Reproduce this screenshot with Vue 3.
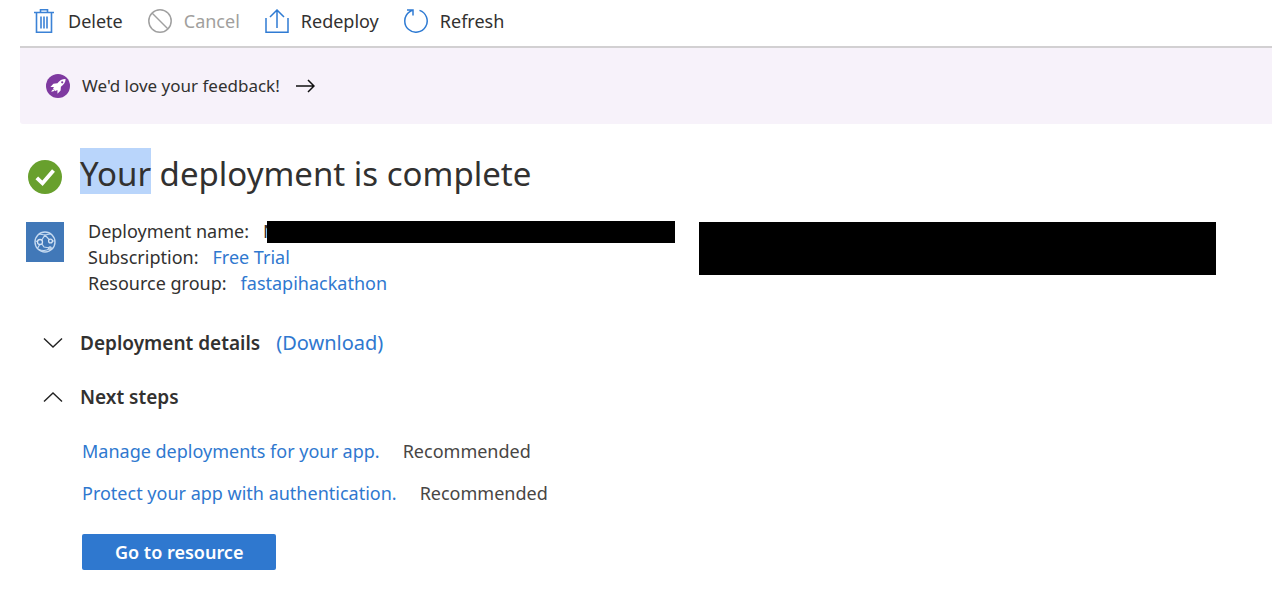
<script setup>
const steps = [
  'Manage deployments for your app.',
  'Protect your app with authentication.',
]
</script>

<template>
  <main class="page">
    <div class="toolbar" role="toolbar" aria-label="Deployment actions">
      <button type="button" class="tool">
        <svg width="22" height="24" viewBox="0 0 22 24" fill="none" stroke="#3b82d6" aria-hidden="true">
          <path d="M0 3.5H20M6.5 3V.8H13.5V3M2.5 4V23.3H17.5V4" stroke-width="1.6" />
          <path d="M7 7.5V19.5M10 7.5V19.5M13 7.5V19.5" stroke-width="1.6" />
        </svg>
        <span>Delete</span>
      </button>
      <button type="button" class="tool" disabled>
        <svg width="24" height="24" viewBox="0 0 24 24" fill="none" stroke="#a0a0a0" stroke-width="1.5" aria-hidden="true">
          <circle cx="12" cy="12" r="11.2" />
          <path d="M4 4L20 20" />
        </svg>
        <span>Cancel</span>
      </button>
      <button type="button" class="tool">
        <svg width="24" height="24" viewBox="0 0 24 24" fill="none" stroke="#2f7bd3" stroke-width="1.5" aria-hidden="true">
          <path d="M1 9V23.2H23V9M12 19V1M5 8L12 1L19 8" />
        </svg>
        <span>Redeploy</span>
      </button>
      <button type="button" class="tool">
        <svg width="24" height="24" viewBox="0 0 24 24" fill="none" stroke="#2f7bd3" stroke-width="1.5" aria-hidden="true">
          <path d="M15.5 1.4A11.2 11.2 0 1 1 5.5 2.9L8.5 1M3 .9H9V6.5" />
        </svg>
        <span>Refresh</span>
      </button>
    </div>

    <a href="#feedback" class="banner">
      <svg width="24" height="24" viewBox="0 0 24 24" aria-hidden="true">
        <circle cx="12" cy="12" r="12" fill="#7f3aa0" />
        <path d="M19.6 5C16.3 4.9 13.6 6.4 11.4 9.3L7.4 9.7L4.4 13L8 12.9L7 14.6L9.4 17L11.4 16.1L11.5 19.8L14.6 16.5L14.9 12.8C17.9 10.4 19.6 8.1 19.6 5Z" fill="#fff" />
        <path d="M7.2 15.2L5 17.6L6.6 17.4L8.8 16.8Z" fill="#fff" />
        <circle cx="16.2" cy="8.3" r="1.1" fill="#7f3aa0" />
      </svg>
      <span>We'd love your feedback!</span>
      <svg class="arrow" width="19" height="14" viewBox="0 0 19 14" fill="none" stroke="#111" stroke-width="1.5" aria-hidden="true">
        <path d="M0 7H18M12 1L18 7L12 13" />
      </svg>
    </a>

    <header class="title">
      <svg width="34" height="34" viewBox="0 0 34 34" aria-hidden="true">
        <circle cx="17" cy="17" r="17" fill="#68a02d" />
        <path d="M8.8 17.8L14.5 23.3L25.5 10.5" fill="none" stroke="#fff" stroke-width="3.8" />
      </svg>
      <h1><span class="selected">Your</span> deployment is complete</h1>
    </header>

    <section class="summary">
      <svg class="resource" width="38" height="40" viewBox="0 0 38 40" aria-hidden="true">
        <path d="M0 0H38V40H0Z" fill="#4178b8" />
        <g fill="none" stroke="#c5daf1" stroke-width="1.2">
          <circle cx="19" cy="20" r="10" stroke-width="1.4" />
          <path d="M14.5 20L19 13L24.5 19M14.5 20L18 25L24 26M19 13L24 12M13 12L19 13M9.5 19L13 20M11.5 26.5L14 22M24.5 19H29M12.5 27.5C16 29 21 29 24 26" />
        </g>
        <g fill="#4178b8" stroke="#d8e6f6" stroke-width="1.3">
          <circle cx="14" cy="20" r="2.5" />
          <circle cx="24.5" cy="19" r="1.9" />
          <circle cx="24" cy="26" r="1.2" />
        </g>
      </svg>
      <dl class="facts">
        <div class="fact">
          <dt>Deployment name:</dt>
          <dd class="hidden-name"><span>N</span></dd>
        </div>
        <div class="fact">
          <dt>Subscription:</dt>
          <dd><a href="#subscription">Free Trial</a></dd>
        </div>
        <div class="fact">
          <dt>Resource group:</dt>
          <dd><a href="#group">fastapihackathon</a></dd>
        </div>
      </dl>
      <div class="redacted"></div>
    </section>

    <section class="fold">
      <button type="button" class="toggle" aria-expanded="false">
        <svg width="20" height="12" viewBox="0 0 20 12" fill="none" stroke="#222" stroke-width="1.4" aria-hidden="true">
          <path d="M1 1.5L10 10L19 1.5" />
        </svg>
        <span>Deployment details</span>
      </button>
      <a href="#download">(Download)</a>
    </section>

    <section class="fold">
      <button type="button" class="toggle" aria-expanded="true">
        <svg width="20" height="12" viewBox="0 0 20 12" fill="none" stroke="#222" stroke-width="1.4" aria-hidden="true">
          <path d="M1 10.5L10 2L19 10.5" />
        </svg>
        <span>Next steps</span>
      </button>
    </section>

    <ul class="steps">
      <li v-for="step in steps" :key="step">
        <a href="#step">{{ step }}</a>
        <span>Recommended</span>
      </li>
    </ul>

    <button type="button" class="primary">Go to resource</button>
  </main>
</template>

<style>
body {
  margin: 0;
  background: #fff;
}
</style>

<style scoped>
.page {
  padding-left: 20px;
  font-family: "Noto Sans", "Open Sans", sans-serif;
  font-size: 18px;
  line-height: 26px;
  color: #323130;
}
button {
  border: 0;
  padding: 0;
  background: none;
  font: inherit;
  color: inherit;
  cursor: pointer;
}
a {
  color: #2f78cf;
  text-decoration: none;
}
svg {
  flex: none;
}
.toolbar {
  display: flex;
  gap: 25px;
  height: 46px;
  padding: 0 14px;
}
.tool {
  display: flex;
  align-items: center;
  gap: 12px;
  height: 41px;
}
.tool:disabled {
  color: #a19f9d;
}
.banner {
  display: flex;
  align-items: center;
  gap: 12px;
  height: 76px;
  padding-left: 26px;
  border-top: 2px solid #d2d0d2;
  border-bottom-left-radius: 3px;
  background: #f7f2fa;
  font-size: 17px;
  color: #323130;
}
.arrow {
  margin-left: 4px;
}
.title {
  display: flex;
  align-items: flex-end;
  gap: 18px;
  margin: 24px 0 0 8px;
}
h1 {
  margin: 0;
  font-size: 33px;
  font-weight: 400;
  line-height: 40px;
}
.selected {
  display: inline-block;
  padding-top: 6px;
  background: #b9d5fb;
}
.summary {
  display: grid;
  grid-template-columns: 38px minmax(0, 587fr) minmax(0, 517fr);
  column-gap: 24px;
  align-items: start;
  margin: 24px 56px 0 6px;
}
.resource,
.redacted {
  margin-top: 4px;
}
.facts {
  margin: 0;
}
.fact {
  display: flex;
  gap: 14px;
}
dd {
  margin: 0;
}
.hidden-name {
  display: flex;
  flex: 1;
  align-items: center;
  overflow: hidden;
  position: relative;
}
.hidden-name::after {
  content: "";
  position: absolute;
  inset: 3px 0 1px 4px;
  background: #000;
}
.redacted {
  height: 53px;
  background: #000;
}
.fold {
  display: flex;
  gap: 16px;
  margin: 28px 0 0 23px;
  font-size: 20px;
}
.summary + .fold {
  margin-top: 34px;
}
.toggle {
  display: flex;
  align-items: center;
  gap: 17px;
  font-size: 19px;
  font-weight: 600;
}
.steps {
  display: grid;
  gap: 16px;
  margin: 28px 0 0 62px;
  padding: 0;
  list-style: none;
}
.steps li {
  display: flex;
  gap: 23px;
}
.steps span {
  color: #484644;
}
.primary {
  height: 36px;
  margin: 28px 0 0 62px;
  padding: 0 33px;
  border-radius: 2px;
  background: #2f78cf;
  color: #fff;
  font-weight: 600;
}
</style>
